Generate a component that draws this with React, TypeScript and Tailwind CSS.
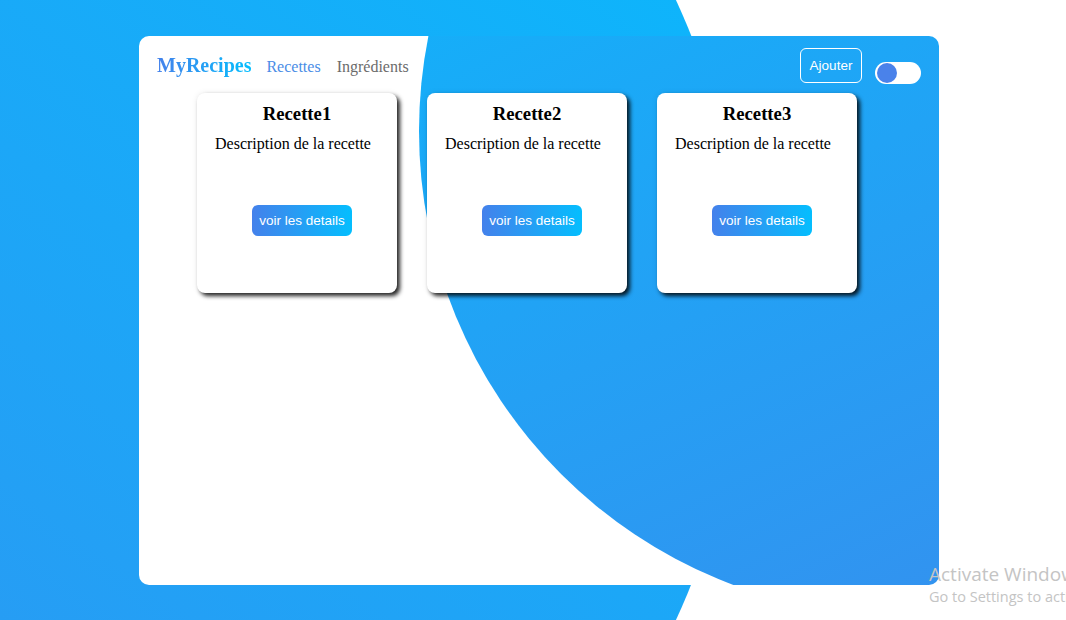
import * as React from 'react'

const recipes = [
  { id: 1, title: 'Recette1', description: 'Description de la recette' },
  { id: 2, title: 'Recette2', description: 'Description de la recette' },
  { id: 3, title: 'Recette3', description: 'Description de la recette' },
]

// toggle switch in the header (visual only)
function ThemeToggle() {
  const [on, setOn] = React.useState(false)
  return (
    <button
      type="button"
      onClick={() => setOn(!on)}
      className={`mt-[14px] ml-[13px] flex h-[22px] w-[46px] items-center rounded-full bg-white p-[1px] ${on ? 'justify-end' : 'justify-start'}`}
    >
      <span className="ml-[1px] block h-[20px] w-[20px] rounded-full bg-[#4a82ea]" />
    </button>
  )
}

function RecipeCard({ title, description }: { title: string; description: string }) {
  return (
    <div className="flex h-[200px] w-[200px] flex-col rounded-[8px] bg-white pt-[10px] shadow-[3px_3px_4px_rgba(0,0,0,0.85),0_0_6px_rgba(0,0,0,0.08)]">
      <h3 className="text-center text-[18.72px] font-bold leading-[21.5px] text-black">{title}</h3>
      <p className="mt-[10px] pl-[18px] text-[16px] leading-[18.4px] text-black">{description}</p>
      <button
        type="button"
        className="mt-[52px] ml-[55px] h-[31px] w-[100px] rounded-[6px] bg-[linear-gradient(to_right,#4481eb,#04befe)] pt-[1px] font-['Liberation_Sans',Arial,sans-serif] text-[13.5px] text-white"
      >
        voir les details
      </button>
    </div>
  )
}

export default function App() {
  return (
    <div className="relative h-[620px] w-[1066px] overflow-hidden bg-white font-['Liberation_Serif','Times_New_Roman',serif]">
      {/* big blue disc on the left, behind the panel */}
      <div className="absolute left-[-736px] top-[-430px] h-[1480px] w-[1480px] rounded-full bg-[linear-gradient(216deg,#04befe_0%,#3b89ee_100%)]" />

      <div className="relative ml-[139px] pt-[36px]">
        <div className="relative h-[549px] w-[800px] overflow-hidden rounded-[10px] bg-white">
          {/* blue disc inside the panel */}
          <div className="absolute left-[280px] top-[-390px] h-[970px] w-[970px] rounded-full bg-[linear-gradient(155deg,#08bbfd_0%,#3a8bed_100%)]" />

          <div className="relative z-10">
            <header className="flex items-start justify-between px-[18px] pt-[12px]">
              <nav className="mt-[6px] flex items-baseline">
                <span className="bg-[linear-gradient(to_right,#4481eb,#04befe)] bg-clip-text text-[20px] font-bold leading-[23px] text-transparent">
                  MyRecipes
                </span>
                <a className="ml-[15px] text-[16px] leading-[18px] text-[#4a8de6]">Recettes</a>
                <a className="ml-[16px] text-[16px] leading-[18px] text-[#6b6b6b]">Ingrédients</a>
              </nav>
              <div className="flex items-start">
                <button
                  type="button"
                  className="h-[35px] w-[62px] rounded-[6px] border border-white pt-[1px] font-['Liberation_Sans',Arial,sans-serif] text-[13.5px] text-white"
                >
                  Ajouter
                </button>
                <ThemeToggle />
              </div>
            </header>

            <main className="mt-[9px] flex gap-[30px] pl-[58px]">
              {recipes.map((r) => (
                <RecipeCard key={r.id} title={r.title} description={r.description} />
              ))}
            </main>
          </div>
        </div>
      </div>

      {/* Windows activation watermark */}
      <div className="pointer-events-none absolute left-[929px] top-[562px] whitespace-nowrap font-['Open_Sans','Noto_Sans',sans-serif] text-[#c4c4c4]">
        <div className="text-[19px] leading-[25px]">Activate Windows</div>
        <div className="text-[14.5px] leading-[20px]">Go to Settings to activate Windows.</div>
      </div>
    </div>
  )
}
